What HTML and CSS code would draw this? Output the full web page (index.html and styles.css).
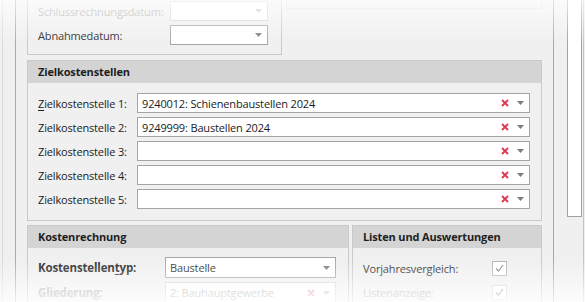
FILE: index.html
```html
<!DOCTYPE html>
<html lang="de">

<head>
    <meta charset="UTF-8">
    <title>Kostenstelle</title>
    <link rel="stylesheet" href="styles.css">
</head>

<body>
    <div class="edge"></div>

    <div class="main">
        <div class="top-row">
            <div class="group group-dates">
                <div class="row">
                    <span class="label disabled label-date">Schlussrechnungsdatum:</span>
                    <div class="field field-date is-disabled">
                        <span class="value"></span>
                        <span class="arrow"><svg width="7" height="4" viewBox="0 0 7 4"><path d="M0 0h7L3.5 4z" /></svg></span>
                    </div>
                </div>
                <div class="row">
                    <span class="label label-date">Abnahmedatum:</span>
                    <div class="field field-date">
                        <span class="value"></span>
                        <span class="arrow"><svg width="7" height="4" viewBox="0 0 7 4"><path d="M0 0h7L3.5 4z" /></svg></span>
                    </div>
                </div>
            </div>
            <div class="group group-other"></div>
        </div>

        <!-- Zielkostenstellen -->
        <div class="group">
            <div class="group-head">Zielkostenstellen</div>
            <div class="group-body">
                <div class="row">
                    <span class="label label-ziel"><u>Z</u>ielkostenstelle 1:</span>
                    <div class="field">
                        <span class="value">9240012: Schienenbaustellen 2024</span>
                        <span class="clear"><svg width="8" height="8" viewBox="0 0 8 8"><path d="M1 1l6 6M7 1L1 7" /></svg></span>
                        <span class="arrow"><svg width="7" height="4" viewBox="0 0 7 4"><path d="M0 0h7L3.5 4z" /></svg></span>
                    </div>
                </div>
                <div class="row">
                    <span class="label label-ziel">Zielkostenstelle 2:</span>
                    <div class="field">
                        <span class="value">9249999: Baustellen 2024</span>
                        <span class="clear"><svg width="8" height="8" viewBox="0 0 8 8"><path d="M1 1l6 6M7 1L1 7" /></svg></span>
                        <span class="arrow"><svg width="7" height="4" viewBox="0 0 7 4"><path d="M0 0h7L3.5 4z" /></svg></span>
                    </div>
                </div>
                <div class="row">
                    <span class="label label-ziel">Zielkostenstelle 3:</span>
                    <div class="field">
                        <span class="value"></span>
                        <span class="clear"><svg width="8" height="8" viewBox="0 0 8 8"><path d="M1 1l6 6M7 1L1 7" /></svg></span>
                        <span class="arrow"><svg width="7" height="4" viewBox="0 0 7 4"><path d="M0 0h7L3.5 4z" /></svg></span>
                    </div>
                </div>
                <div class="row">
                    <span class="label label-ziel">Zielkostenstelle 4:</span>
                    <div class="field">
                        <span class="value"></span>
                        <span class="clear"><svg width="8" height="8" viewBox="0 0 8 8"><path d="M1 1l6 6M7 1L1 7" /></svg></span>
                        <span class="arrow"><svg width="7" height="4" viewBox="0 0 7 4"><path d="M0 0h7L3.5 4z" /></svg></span>
                    </div>
                </div>
                <div class="row">
                    <span class="label label-ziel">Zielkostenstelle 5:</span>
                    <div class="field">
                        <span class="value"></span>
                        <span class="clear"><svg width="8" height="8" viewBox="0 0 8 8"><path d="M1 1l6 6M7 1L1 7" /></svg></span>
                        <span class="arrow"><svg width="7" height="4" viewBox="0 0 7 4"><path d="M0 0h7L3.5 4z" /></svg></span>
                    </div>
                </div>
            </div>
        </div>

        <div class="bottom-row">
            <div class="group group-kosten">
                <div class="group-head">Kostenrechnung</div>
                <div class="group-body">
                    <div class="row">
                        <span class="label label-kosten bold">Kostenstellen<u>t</u>yp:</span>
                        <div class="field">
                            <span class="value">Baustelle</span>
                            <span class="arrow"><svg width="7" height="4" viewBox="0 0 7 4"><path d="M0 0h7L3.5 4z" /></svg></span>
                        </div>
                    </div>
                    <div class="row">
                        <span class="label label-kosten bold disabled">Gliederung:</span>
                        <div class="field is-disabled">
                            <span class="value">2: Bauhauptgewerbe</span>
                            <span class="clear"><svg width="8" height="8" viewBox="0 0 8 8"><path d="M1 1l6 6M7 1L1 7" /></svg></span>
                            <span class="arrow"><svg width="7" height="4" viewBox="0 0 7 4"><path d="M0 0h7L3.5 4z" /></svg></span>
                        </div>
                    </div>
                </div>
            </div>
            <div class="group group-listen">
                <div class="group-head">Listen und Auswertungen</div>
                <div class="group-body">
                    <div class="row">
                        <span class="label label-listen">Vorjahresvergleich:</span>
                        <span class="check"><svg width="9" height="8" viewBox="0 0 9 8"><path d="M1 4.5l2.5 2.5L8 1" /></svg></span>
                    </div>
                    <div class="row">
                        <span class="label label-listen disabled">Listenanzeige:</span>
                        <span class="check is-disabled"><svg width="9" height="8" viewBox="0 0 9 8"><path d="M1 4.5l2.5 2.5L8 1" /></svg></span>
                    </div>
                </div>
            </div>
        </div>
    </div>

    <div class="side">
        <div class="scrollbar"></div>
        <div class="side-line"></div>
    </div>

    <!-- weicher Rand oben/unten -->
    <div class="fade"></div>
</body>

</html>
```

FILE: styles.css
```css
body {
    margin: 0;
    width: 585px;
    height: 302px;
    overflow: hidden;
    display: flex;
    background-color: #f0f0f0;
    font-family: "Open Sans", "Noto Sans", sans-serif;
    font-size: 11px;
    letter-spacing: -0.15px;
    color: #222;
}

/* linker Rand */
.edge {
    flex: none;
    margin-left: 2px;
    width: 12px;
    margin-right: 11px;
    border-left: 1px solid #dadada;
    border-right: 1px solid #a9a9a9;
}

.main {
    flex: none;
    width: 515px;
    display: flex;
    flex-direction: column;
}

.top-row {
    display: flex;
    gap: 3px;
    margin-top: -9px;
    margin-bottom: 5px;
}

.group {
    border: 1px solid #c9c9c9;
    box-sizing: border-box;
}

.group-dates {
    width: 255px;
    padding: 10px 10px 9px;
    border-top: none;
}

.group-other {
    flex: 1;
    height: 18px;
    border-color: #e2e2e2;
    border-top: none;
    margin-left: 1px;
}

.group-head {
    height: 22px;
    line-height: 22px;
    padding-left: 10px;
    background-color: #d4d4d4;
    font-weight: bold;
    color: #1e1e1e;
}

.group-body {
    display: flex;
    flex-direction: column;
    gap: 4px;
    padding: 10px 11px 11px 10px;
}

.row {
    display: flex;
    align-items: center;
    height: 20px;
}

.group-dates .row + .row {
    margin-top: 4px;
}

.label {
    flex: none;
    white-space: nowrap;
}

.label-date {
    width: 132px;
}

.label-ziel {
    width: 99px;
}

.label-kosten {
    width: 127px;
}

.label-listen {
    width: 129px;
}

.bold {
    font-weight: bold;
    font-size: 11.5px;
}

.disabled {
    color: #a9a9a9;
}

u {
    text-decoration-thickness: 1px;
    text-underline-offset: 2px;
}

.field {
    flex: 1;
    height: 20px;
    display: flex;
    align-items: center;
    box-sizing: border-box;
    border: 1px solid #a5a5a5;
    background-color: #fff;
    padding: 0 5px 0 4px;
    color: #1a1a1a;
}

.field-date {
    flex: none;
    width: 98px;
}

.field.is-disabled {
    border-color: #d4d4d4;
    color: #a9a9a9;
}

.value {
    flex: 1;
    white-space: nowrap;
}

.clear {
    display: flex;
    margin-right: 8px;
}

.clear path {
    stroke: #d9364f;
    stroke-width: 1.8;
}

.is-disabled .clear path {
    stroke: #e7a3ad;
}

.arrow {
    display: flex;
}

.arrow path {
    fill: #7d7d7d;
}

.is-disabled .arrow path {
    fill: #c4c4c4;
}

.bottom-row {
    display: flex;
    gap: 3px;
    margin-top: 4px;
}

.group-kosten {
    width: 322px;
}

.group-kosten .group-body {
    padding-right: 12px;
    padding-top: 9px;
}

.group-kosten .row {
    height: 21px;
}

.group-kosten .field {
    height: 21px;
}

.group-listen {
    flex: 1;
}

.group-listen .group-body {
    padding-top: 10px;
}

.check {
    width: 13px;
    height: 13px;
    border: 1px solid #b4b4b4;
    background-color: #fff;
    display: flex;
    align-items: center;
    justify-content: center;
}

.check path {
    fill: none;
    stroke: #8a8a8a;
    stroke-width: 1.2;
}

.check.is-disabled {
    border-color: #d4d4d4;
}

/* rechter Bereich mit Scrollbalken */
.side {
    flex: 1;
    margin-left: 11px;
    border-left: 1px solid #a8a8a8;
    display: flex;
    padding-left: 13px;
}

.scrollbar {
    flex: none;
    width: 15px;
    height: 217px;
    box-sizing: border-box;
    border: 1px solid #a2a2a2;
    border-top: none;
    background-color: #fff;
}

.side-line {
    width: 1px;
    margin-left: 1px;
    background-color: #c4c4c4;
}

.fade {
    position: fixed;
    inset: 0;
    pointer-events: none;
    background: linear-gradient(to bottom,
            rgba(255, 255, 255, 0.7) 0,
            rgba(255, 255, 255, 0) 45px,
            rgba(255, 255, 255, 0) 258px,
            rgba(255, 255, 255, 0.8) 302px);
}
```
